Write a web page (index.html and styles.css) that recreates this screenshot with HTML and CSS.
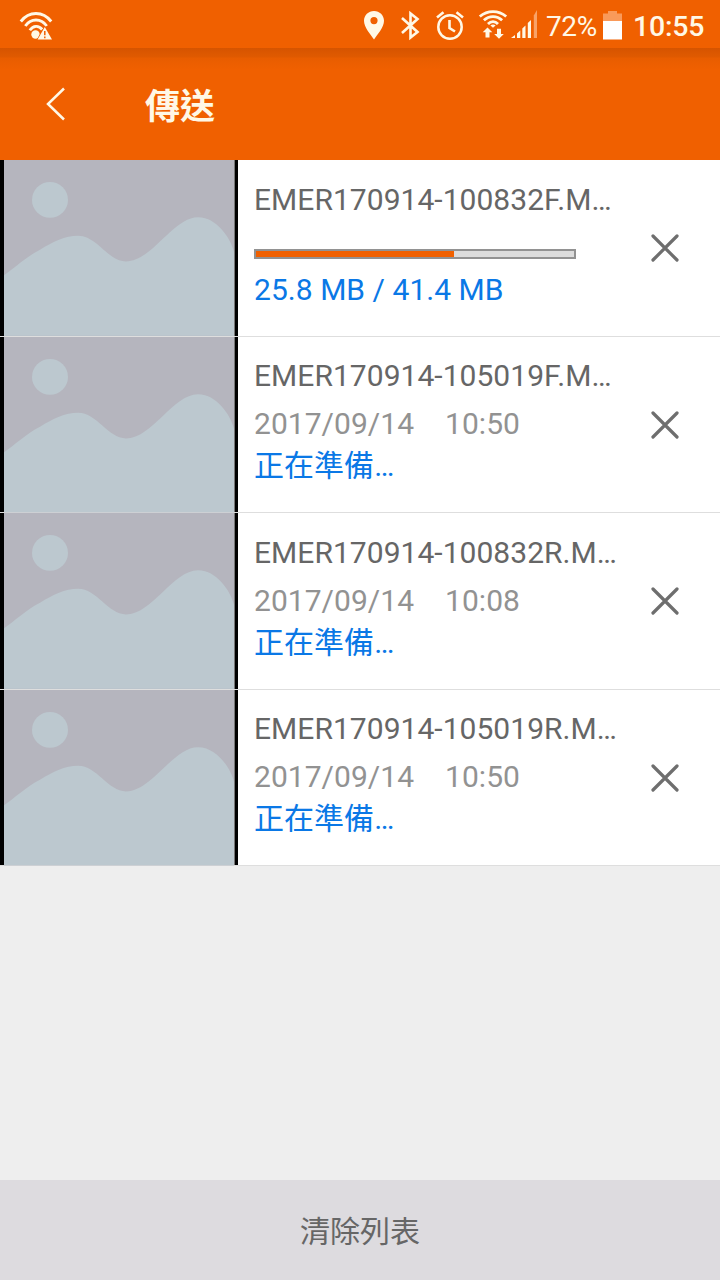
FILE: index.html
```html
<!DOCTYPE html>
<html lang="zh-Hant">
<head>
    <meta charset="UTF-8">
    <meta name="viewport" content="width=device-width, initial-scale=1.0">
    <title>傳送</title>
    <link rel="stylesheet" href="styles.css">
</head>
<body>

    <!-- Shared drawings -->
    <svg class="sprite" width="0" height="0">
        <symbol id="thumb" viewBox="0 0 230 176" preserveAspectRatio="none">
            <rect width="230" height="176" fill="#b5b5be"/>
            <circle cx="46" cy="40" r="18" fill="#bcc8cf"/>
            <path d="M0 115.500C10 109 22 97 36 90C49 82 61 76 74 76C93 76 104 101.700 122 101.700C148 101.700 169 57.300 194 57.300C213 57.300 227 79 230 92V176H0Z" fill="#bcc8cf"/>
        </symbol>
        <symbol id="close" viewBox="0 0 28 28">
            <path d="M2 2L26 26M26 2L2 26" fill="none" stroke="#6e6e6e" stroke-width="3.200" stroke-linecap="round"/>
        </symbol>
    </svg>

    <div class="status-bar">
        <svg class="wifi-warn" width="34" height="30" viewBox="0 0 34 30">
            <g fill="none" stroke="#fff8e6" stroke-width="2.900">
                <path d="M1.800 10.500C10 -.2 24 -.2 32.200 10.500"/>
                <path d="M6.300 15C12 7 22 7 27.700 15"/>
                <path d="M10.800 19.300C14.200 14.200 19.800 14.200 23.200 18.500"/>
            </g>
            <circle cx="16.500" cy="23.500" r="4.200" fill="#fff8e6"/>
            <path d="M25.800 16L33 28.500H18.600Z" fill="#fff8e6" stroke="#f06000" stroke-width="1.400" paint-order="stroke"/>
            <path d="M25.800 20V24.300M25.800 25.500V27.300" stroke="#f06000" stroke-width="1.500"/>
        </svg>

        <div class="status-icons">
            <svg class="pin" width="20" height="29" viewBox="0 0 20 29">
                <path fill-rule="evenodd" d="M10 0C4.400 0 0 4.400 0 9.800C0 16.500 6.500 23.500 10 28.500C13.500 23.500 20 16.500 20 9.800C20 4.400 15.600 0 10 0ZM10 6A3.600 3.600 0 1 1 10 13.200A3.600 3.600 0 0 1 10 6Z" fill="#fff8e6"/>
            </svg>
            <svg class="bluetooth" width="18" height="29" viewBox="0 0 18 29">
                <path d="M1 7L16.500 21L9.500 26.500V2.500L16.500 8L1 22" fill="none" stroke="#fff8e6" stroke-width="2.600"/>
            </svg>
            <svg class="alarm" width="28" height="29" viewBox="0 0 28 29">
                <circle cx="14" cy="16" r="11.700" fill="none" stroke="#fff8e6" stroke-width="2.500"/>
                <path d="M13.500 9V17L19 20.500M1 6.500L7.500 1.200M20.500 1.200L27 6.500" fill="none" stroke="#fff8e6" stroke-width="2.600"/>
            </svg>
            <svg class="wifi-data" width="28" height="30" viewBox="0 0 28 30">
                <g fill="none" stroke="#fff8e6" stroke-width="2.800">
                    <path d="M.8 7.500C8.500 .9 19.500 .9 27.200 7.500"/>
                    <path d="M4.900 11.300C10.200 6.300 17.800 6.300 23.100 11.300"/>
                    <path d="M9 15C12 11.900 16 11.900 19 15"/>
                </g>
                <path d="M11.400 16.400Q14 14.600 16.600 16.400L14 18.700Z" fill="#fff8e6"/>
                <path d="M8.500 18.500L13.300 23.300H10.500V28.500H6.500V23.300H3.700ZM20 29.800L15.200 25H18V19.800H22V25H24.800Z" fill="#fff8e6"/>
            </svg>
            <svg class="signal" width="27" height="29" viewBox="0 0 27 29">
                <path d="M0 27L4 24V27ZM6 22.500L9.300 19.500V27H6ZM11.300 17.500L14.500 14.500V27H11.300ZM16.800 12L20 9V27H16.800Z" fill="#fff8e6"/>
                <path d="M22.800 4.500L26 -1V27H22.800Z" fill="#f9a267"/>
            </svg>
            <span class="percent">72%</span>
            <svg class="battery" width="19" height="29" viewBox="0 0 19 29">
                <path d="M0 2.500H5V0H14V2.500H19V10H0Z" fill="#f99a5a"/>
                <path d="M0 10H19V28.500H0Z" fill="#fff"/>
            </svg>
            <span class="clock">10:55</span>
        </div>
    </div>

    <header class="header">
        <svg class="back" width="20" height="34" viewBox="0 0 20 34">
            <path d="M18 1.500L2 17L18 32.500" fill="none" stroke="#fff8e6" stroke-width="2.500"/>
        </svg>
        <h1>傳送</h1>
    </header>

    <main class="list">
        <div class="item">
            <div class="thumb"><svg><use href="#thumb"/></svg></div>
            <div class="info">
                <div class="name">EMER170914-100832F.M…</div>
                <div class="progress"><div class="progress-fill" style="width: 62.300%"></div></div>
                <div class="size">25.8 MB / 41.4 MB</div>
            </div>
            <svg class="close"><use href="#close"/></svg>
        </div>

        <div class="item">
            <div class="thumb"><svg><use href="#thumb"/></svg></div>
            <div class="info">
                <div class="name">EMER170914-105019F.M…</div>
                <div class="date"><span>2017/09/14</span><span>10:50</span></div>
                <div class="state">正在準備…</div>
            </div>
            <svg class="close"><use href="#close"/></svg>
        </div>

        <div class="item">
            <div class="thumb"><svg><use href="#thumb"/></svg></div>
            <div class="info">
                <div class="name">EMER170914-100832R.M…</div>
                <div class="date"><span>2017/09/14</span><span>10:08</span></div>
                <div class="state">正在準備…</div>
            </div>
            <svg class="close"><use href="#close"/></svg>
        </div>

        <div class="item">
            <div class="thumb"><svg><use href="#thumb"/></svg></div>
            <div class="info">
                <div class="name">EMER170914-105019R.M…</div>
                <div class="date"><span>2017/09/14</span><span>10:50</span></div>
                <div class="state">正在準備…</div>
            </div>
            <svg class="close"><use href="#close"/></svg>
        </div>
    </main>

    <button type="button" class="clear-btn">清除列表</button>

</body>
</html>
```
FILE: styles.css
```css
* {
    box-sizing: border-box;
}

body {
    margin: 0;
    height: 1280px;
    display: flex;
    flex-direction: column;
    background-color: #eeeeee;
    font-family: Roboto, "Noto Sans CJK TC", sans-serif;
    font-size: 30px;
    line-height: 36px;
    overflow: hidden;
}

svg {
    display: block;
    flex: none;
    overflow: visible;
}

.sprite {
    position: absolute;
}

/* Status bar */
.status-bar {
    height: 48px;
    flex: none;
    display: flex;
    justify-content: space-between;
    padding: 11px 14px 0 19px;
    background-color: #f06000;
    color: #fff8e6;
}

.status-icons {
    display: flex;
}

.bluetooth {
    margin-left: 17px;
}

.alarm {
    margin-left: 17px;
}

.wifi-data {
    margin: -2px 0 0 15px;
}

.signal {
    margin-left: 4px;
}

.percent {
    width: 51px;
    margin-left: 8px;
    font-size: 28px;
    line-height: 32px;
    letter-spacing: -0.4px;
}

.battery {
    margin-left: 6px;
}

.clock {
    width: 73px;
    margin-left: 11px;
    font-size: 28.5px;
    font-weight: 500;
    line-height: 32px;
    letter-spacing: -0.2px;
    white-space: nowrap;
}

/* Header */
.header {
    height: 112px;
    flex: none;
    display: flex;
    align-items: center;
    padding-left: 46px;
    background: linear-gradient(#d65400, #e05a00 9px, #e85d00 10px, #f06000 22px);
    color: #fff8e6;
}

h1 {
    margin: 7px 0 0 79px;
    font-size: 35px;
    font-weight: 700;
    line-height: 48px;
}

/* Transfer list */
.item {
    height: 176.5px;
    display: flex;
    background-color: #fff;
    border-bottom: 1px solid #dedede;
}

.thumb {
    width: 238px;
    flex: none;
    padding: 0 4px;
    background: linear-gradient(90deg, #000 4px, #bcc8cf 4px, #bcc8cf 234px, #777 234px, #777 235px, #000 235px);
}

    .thumb svg {
        width: 230px;
        height: 100%;
    }

.info {
    width: 412px;
    padding: 21.9px 0 0 16px;
    letter-spacing: 0.04px;
    white-space: nowrap;
}

.name {
    color: #666;
}

.progress {
    width: 322px;
    height: 10px;
    margin: 31px 0 13px;
    border: 2px solid #929292;
    background-color: #dcdcdc;
}

.progress-fill {
    height: 100%;
    background-color: #f06000;
}

.size, .state {
    color: #0a78e6;
}

.date {
    display: flex;
    gap: 31px;
    margin-top: 12px;
    color: #929292;
}

.state {
    margin-top: 6px;
}

.close {
    width: 28px;
    height: 28px;
    margin: 74px 0 0 1px;
}

/* Bottom button */
.clear-btn {
    height: 100px;
    flex: none;
    margin-top: auto;
    padding: 0 0 2px;
    border: none;
    background-color: #dddbdf;
    color: #666;
    font-family: inherit;
    font-size: 30px;
}
```
